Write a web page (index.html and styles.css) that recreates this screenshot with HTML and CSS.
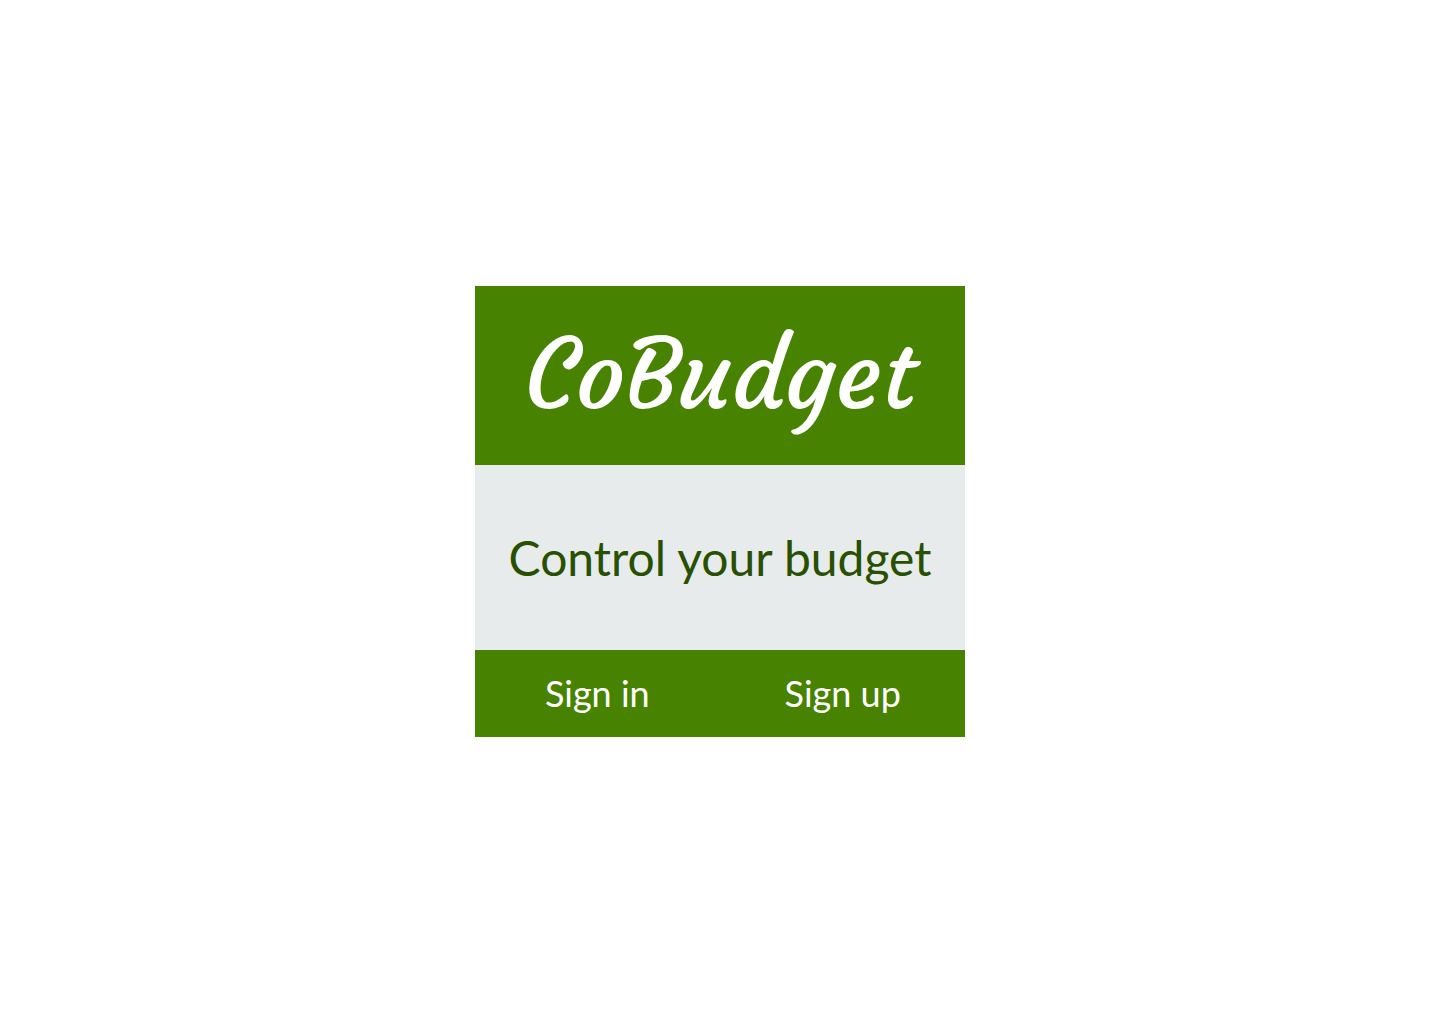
FILE: index.html
```html
<!DOCTYPE html>
<html lang="en">
<head>
<meta charset="utf-8">
<meta name="viewport" content="width=device-width, initial-scale=1">
<title>CoBudget</title>
<link rel="stylesheet" href="styles.css">
</head>
<body>
<main class="card">
  <header class="brand"><h1 class="brand-name">CoBudget</h1></header>
  <p class="tagline">Control your budget</p>
  <nav class="actions">
    <a class="action" href="#signin">Sign in</a>
    <a class="action" href="#signup">Sign up</a>
  </nav>
</main>
</body>
</html>
```
FILE: styles.css
```css
* {
  box-sizing: border-box;
}

body {
  margin: 0;
  min-height: 100vh;
  padding-bottom: 1px;
  display: flex;
  align-items: center;
  justify-content: center;
  background: #fff;
  font-family: Lato, "Liberation Sans", sans-serif;
}

.card {
  background: #e7ebec;
}

.brand {
  padding: 24px 32px;
  background: #478300;
  color: #fff;
  text-align: center;
}

.brand-name {
  margin: 0;
  font-family: Courgette, cursive;
  font-size: 96px;
  font-weight: 400;
  line-height: 131px;
}

.tagline {
  margin: 0;
  padding: 64px 34px;
  color: #285000;
  font-size: 48px;
  line-height: 57px;
  text-align: center;
}

.actions {
  display: grid;
  grid-template-columns: 1fr 1fr;
  background: #478300;
}

.action {
  padding: 20px 0;
  color: #fff;
  font-size: 36px;
  line-height: 47px;
  text-align: center;
  text-decoration: none;
}
```
